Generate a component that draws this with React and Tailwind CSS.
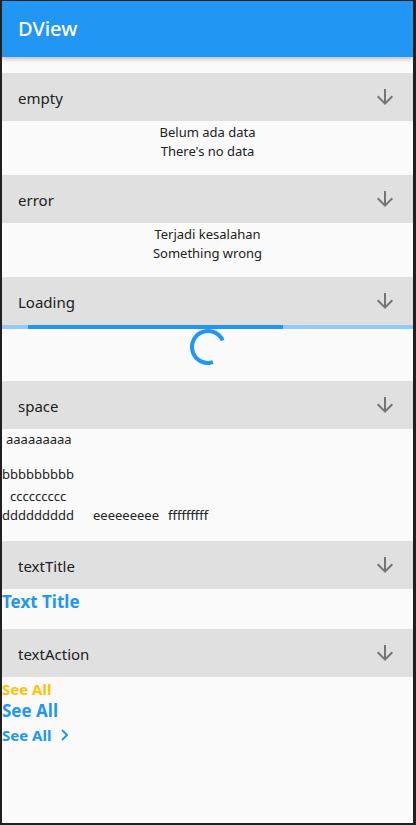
import React from "react";

const font = { fontFamily: '"Noto Sans", "Open Sans", sans-serif' };

const ArrowDown = () => (
  <svg width="24" height="24" viewBox="0 0 24 24" fill="#757575">
    <path d="M20 12l-1.41-1.41L13 16.17V4h-2v12.17l-5.58-5.59L4 12l8 8 8-8z" />
  </svg>
);

const Header = ({ title }) => (
  <div className="h-[48px] bg-[#e0e0e0] flex items-center justify-between pl-4 pr-[16px]">
    <span className="text-[15px] text-[#212121] pt-[2px]">{title}</span>
    <ArrowDown />
  </div>
);

const Spinner = () => (
  <svg width="36" height="36" viewBox="0 0 36 36">
    <path
      d="M32.62 11.49 A16 16 0 1 0 22.94 33.22"
      fill="none"
      stroke="#2196f3"
      strokeWidth="4"
    />
  </svg>
);

export default function App() {
  return (
    <div
      className="h-[825px] bg-[#202020] pl-[2px] pt-[1px] pr-[3px] pb-[2px]"
      style={font}
    >
      <div className="h-full bg-[#fafafa] flex flex-col overflow-hidden">
        <div className="h-[56px] bg-[#2196f3] flex items-center px-4 shadow-[0_2px_4px_rgba(0,0,0,0.25)] relative z-10">
          <span className="text-white text-[20px] font-medium">DView</span>
        </div>

        <div className="h-4" />
        <Header title="empty" />
        <div className="h-[38px] pt-[2px] flex flex-col items-center text-[13px] leading-[19px] text-[#212121]">
          <span>Belum ada data</span>
          <span>There's no data</span>
        </div>

        <div className="h-4" />
        <Header title="error" />
        <div className="h-[38px] pt-[2px] flex flex-col items-center text-[13px] leading-[19px] text-[#212121]">
          <span>Terjadi kesalahan</span>
          <span>Something wrong</span>
        </div>

        <div className="h-4" />
        <Header title="Loading" />
        <div className="h-[4px] bg-[#90caf9] flex">
          <div className="w-[26px]" />
          <div className="w-[255px] bg-[#2196f3]" />
        </div>
        <div className="flex justify-center">
          <Spinner />
        </div>

        <div className="h-4" />
        <Header title="space" />
        <div className="flex flex-col items-start text-[13px] leading-[19px] text-[#212121]">
          <span className="px-1 pt-[1px]">aaaaaaaaa</span>
          <div className="h-4" />
          <span>bbbbbbbbb</span>
          <span className="px-2 mt-[3px]">ccccccccc</span>
          <div className="flex">
            <span className="w-[91px] shrink-0">ddddddddd</span>
            <span className="w-[75px] shrink-0">eeeeeeeee</span>
            <span className="shrink-0">fffffffff</span>
          </div>
        </div>

        <div className="h-4" />
        <Header title="textTitle" />
        <div className="h-[24px] flex items-center pt-[2px]">
          <span className="text-[17px] font-bold text-[#2196f3] leading-[24px]">Text Title</span>
        </div>

        <div className="h-4" />
        <Header title="textAction" />
        <div className="flex flex-col items-start font-bold text-[#2196f3] pt-[2px]">
          <span className="text-[15px] leading-[20px] text-[#ffc107]">See All</span>
          <span className="text-[17px] leading-[24px]">See All</span>
          <span className="text-[15px] leading-[24px] flex items-center gap-[8px]">
            See All
            <svg width="12" height="14" viewBox="0 0 12 14" fill="none" stroke="#2196f3" strokeWidth="2">
              <path d="M3 2l5 5-5 5" />
            </svg>
          </span>
        </div>
      </div>
    </div>
  );
}
